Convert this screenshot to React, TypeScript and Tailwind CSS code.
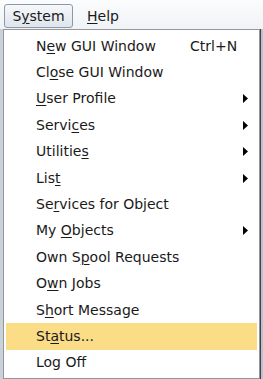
const items: { label: string; key: number; shortcut?: string; sub?: boolean }[] = [
  { label: "New GUI Window", key: 1, shortcut: "Ctrl+N" },
  { label: "Close GUI Window", key: 2 },
  { label: "User Profile", key: 0, sub: true },
  { label: "Services", key: 5, sub: true },
  { label: "Utilities", key: 8, sub: true },
  { label: "List", key: 3, sub: true },
  { label: "Services for Object", key: 2 },
  { label: "My Objects", key: 3, sub: true },
  { label: "Own Spool Requests", key: 5 },
  { label: "Own Jobs", key: 1 },
  { label: "Short Message", key: 1 },
  { label: "Status...", key: 2 },
  { label: "Log Off", key: 6 },
];

function Mnemonic({ text, idx }: { text: string; idx: number }) {
  return (
    <span>
      {text.slice(0, idx)}
      <span className="underline underline-offset-[1.5px] decoration-1">{text[idx]}</span>
      {text.slice(idx + 1)}
    </span>
  );
}

export default function App() {
  return (
    <div
      className="w-[263px] h-[379px] overflow-hidden bg-[#dfe4ea] text-[#1a1a1a]"
      style={{ fontFamily: '"DejaVu Sans", Tahoma, sans-serif' }}
    >
      {/* Menu bar */}
      <div className="h-[29px] flex items-end pl-[4px] gap-[14px] bg-gradient-to-b from-[#fbfcfd] to-[#f0f3f6]">
        <div className="h-[24px] w-[69px] mb-[1px] flex items-center justify-center rounded-[3px] border border-[#8d99ab] bg-gradient-to-b from-[#f6f8fa] to-[#dfe5ed] text-[14px]">
          <Mnemonic text="System" idx={1} />
        </div>
        <div className="h-[24px] mb-[1px] flex items-center text-[14px]">
          <Mnemonic text="Help" idx={0} />
        </div>
      </div>

      {/* Dropdown */}
      <div className="flex">
        <div className="w-[3px] h-[350px] bg-[#c9d1db]" />
        <div className="w-[257px] h-[350px] border border-[#979797] bg-white pt-[3px] px-[2px]">
          {items.map((it) => (
            <div
              key={it.label}
              className={`h-[26.4px] flex items-center pl-[30px] pr-[9px] text-[14px] ${
                it.label === "Status..." ? "bg-[#fbdc87]" : ""
              }`}
            >
              <div className="flex-1 whitespace-nowrap">
                <Mnemonic text={it.label} idx={it.key} />
              </div>
              {it.shortcut && <div className="w-[58px] whitespace-nowrap">{it.shortcut}</div>}
              {it.sub && (
                <svg width="5" height="9" viewBox="0 0 5 9">
                  <path d="M0 0 L5 4.5 L0 9 Z" fill="#000" />
                </svg>
              )}
            </div>
          ))}
        </div>
        <div className="w-[3px] h-[350px] bg-[#b9c2cd] border-l border-[#3a4150]" />
      </div>
    </div>
  );
}
